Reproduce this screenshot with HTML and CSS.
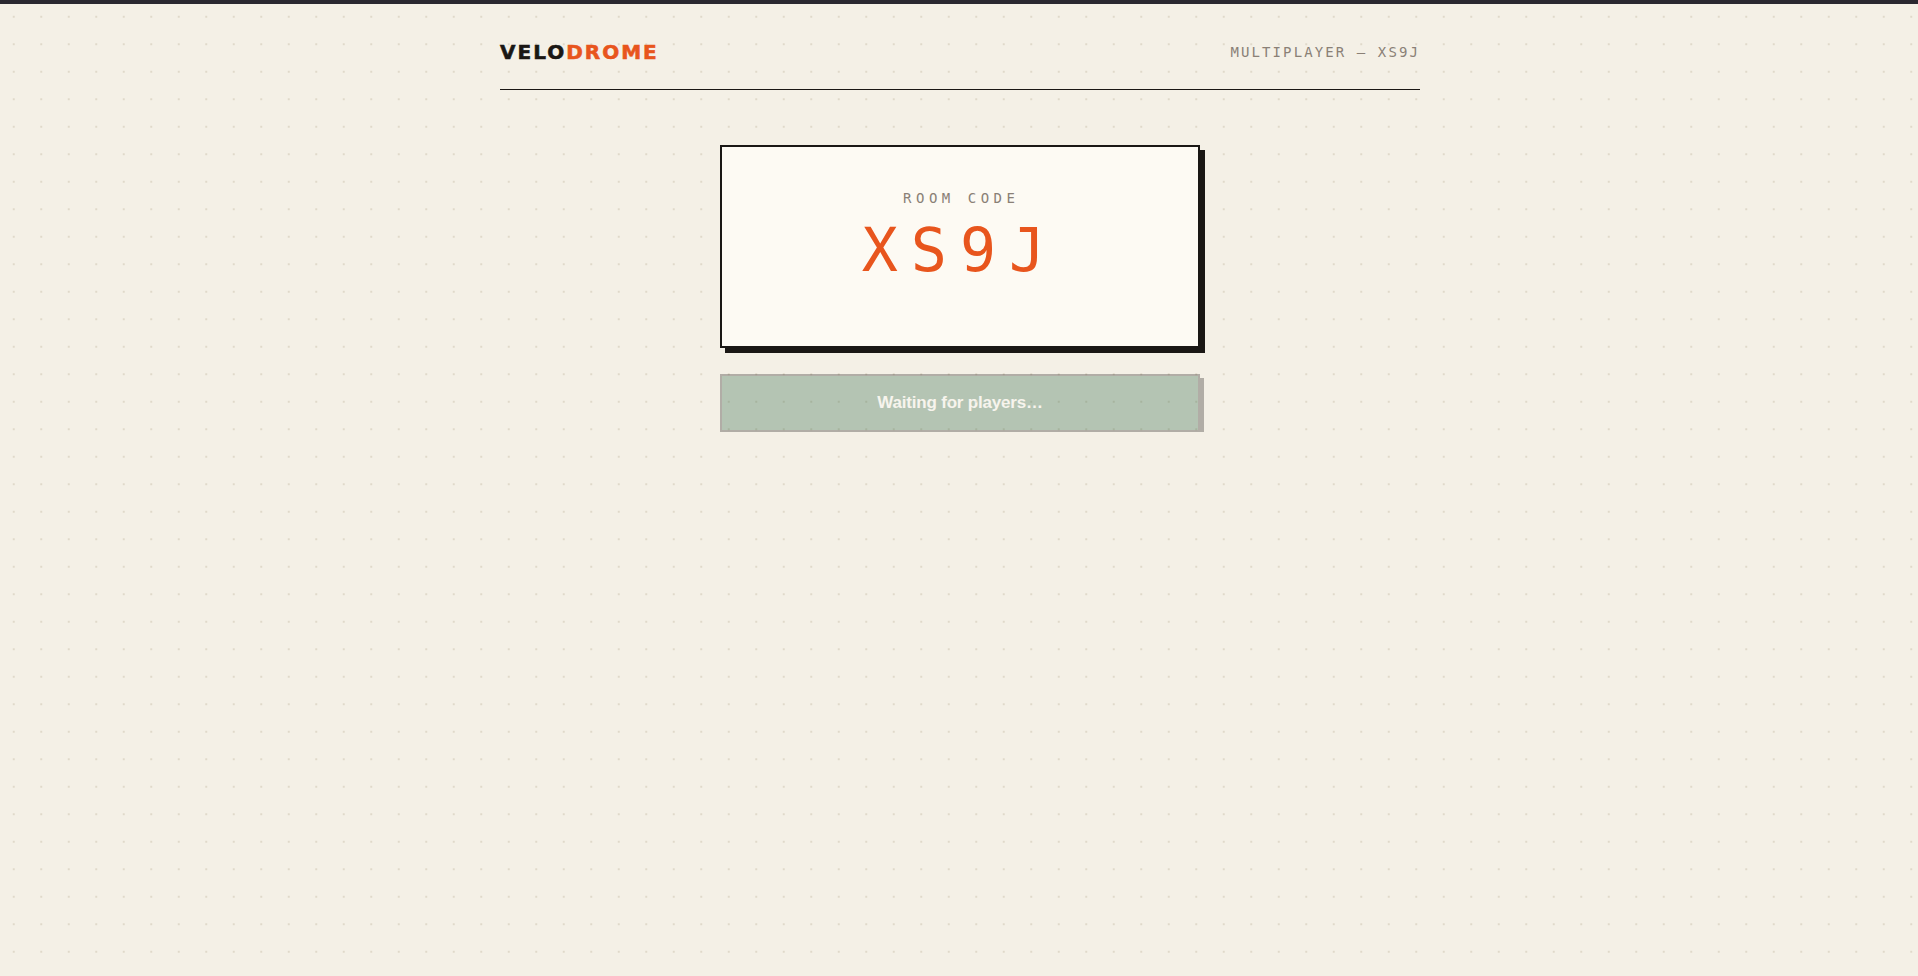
FILE: index.html
```html
<!DOCTYPE html>
<html lang="en">
<head>
<meta charset="utf-8">
<title>Velodrome — Multiplayer</title>
<link rel="stylesheet" href="styles.css">
</head>
<body>
<div class="topbar"></div>
<div class="wrap">
  <header class="header">
    <div class="logo"><span class="logo-ink">VELO</span><span class="logo-accent">DROME</span></div>
    <div class="mode">MULTIPLAYER — XS9J</div>
  </header>
  <main class="main">
    <section class="card">
      <div class="card-label">ROOM CODE</div>
      <div class="card-code">XS9J</div>
    </section>
    <button class="start-btn" disabled>Waiting for players…</button>
  </main>
</div>
</body>
</html>
```
FILE: styles.css
```css
html {
  background-color: #f4f0e6;
  background-image: radial-gradient(circle at center, #e0d9ca 0, #e0d9ca 1px, rgba(224,217,202,0) 1.4px);
  background-size: 27.5px 27.5px;
  background-position: 0 3px;
  min-height: 100%;
}
body {
  margin: 0;
  font-family: "DejaVu Sans Mono", "Liberation Mono", monospace;
  color: #1a1714;
}
.topbar {
  height: 4px;
  background: #2a2830;
}
.wrap {
  width: 920px;
  margin-left: calc(50% - 459px);
}
.header {
  display: flex;
  justify-content: space-between;
  align-items: center;
  padding: 36px 0 25px;
  border-bottom: 1px solid #1a1714;
}
.logo {
  font-family: "DejaVu Sans", "Liberation Sans", sans-serif;
  font-weight: 700;
  font-size: 20px;
  line-height: 24px;
  letter-spacing: 2px;
  -webkit-text-stroke: 0.6px currentColor;
}
.logo-ink { color: #1a1714; }
.logo-accent { color: #e8551d; }
.mode {
  font-size: 14px;
  line-height: 24px;
  letter-spacing: 2.1px;
  color: #8a8076;
}
.main {
  display: flex;
  flex-direction: column;
  align-items: center;
  padding-top: 55px;
}
.card {
  width: 476px;
  border: 2px solid #1a1714;
  background: #fdfaf3;
  box-shadow: 5px 5px 0 #1a1714;
  padding: 42px 0 66px;
  text-align: center;
}
.card-label {
  font-size: 14px;
  line-height: 18px;
  letter-spacing: 4.5px;
  color: #8a8076;
  padding-left: 2.5px;
}
.card-code {
  margin-top: 13px;
  font-size: 60px;
  line-height: 60px;
  letter-spacing: 13px;
  color: #e8551d;
}
.start-btn {
  margin-top: 26px;
  width: 480px;
  height: 58px;
  border: 2px solid #1a1714;
  background: #25613f;
  color: #ffffff;
  box-shadow: 4px 4px 0 #1a1714;
  opacity: 0.3;
  font-family: "Liberation Sans", Arial, sans-serif;
  font-weight: 700;
  font-size: 17px;
  letter-spacing: -0.2px;
  cursor: not-allowed;
}
```
